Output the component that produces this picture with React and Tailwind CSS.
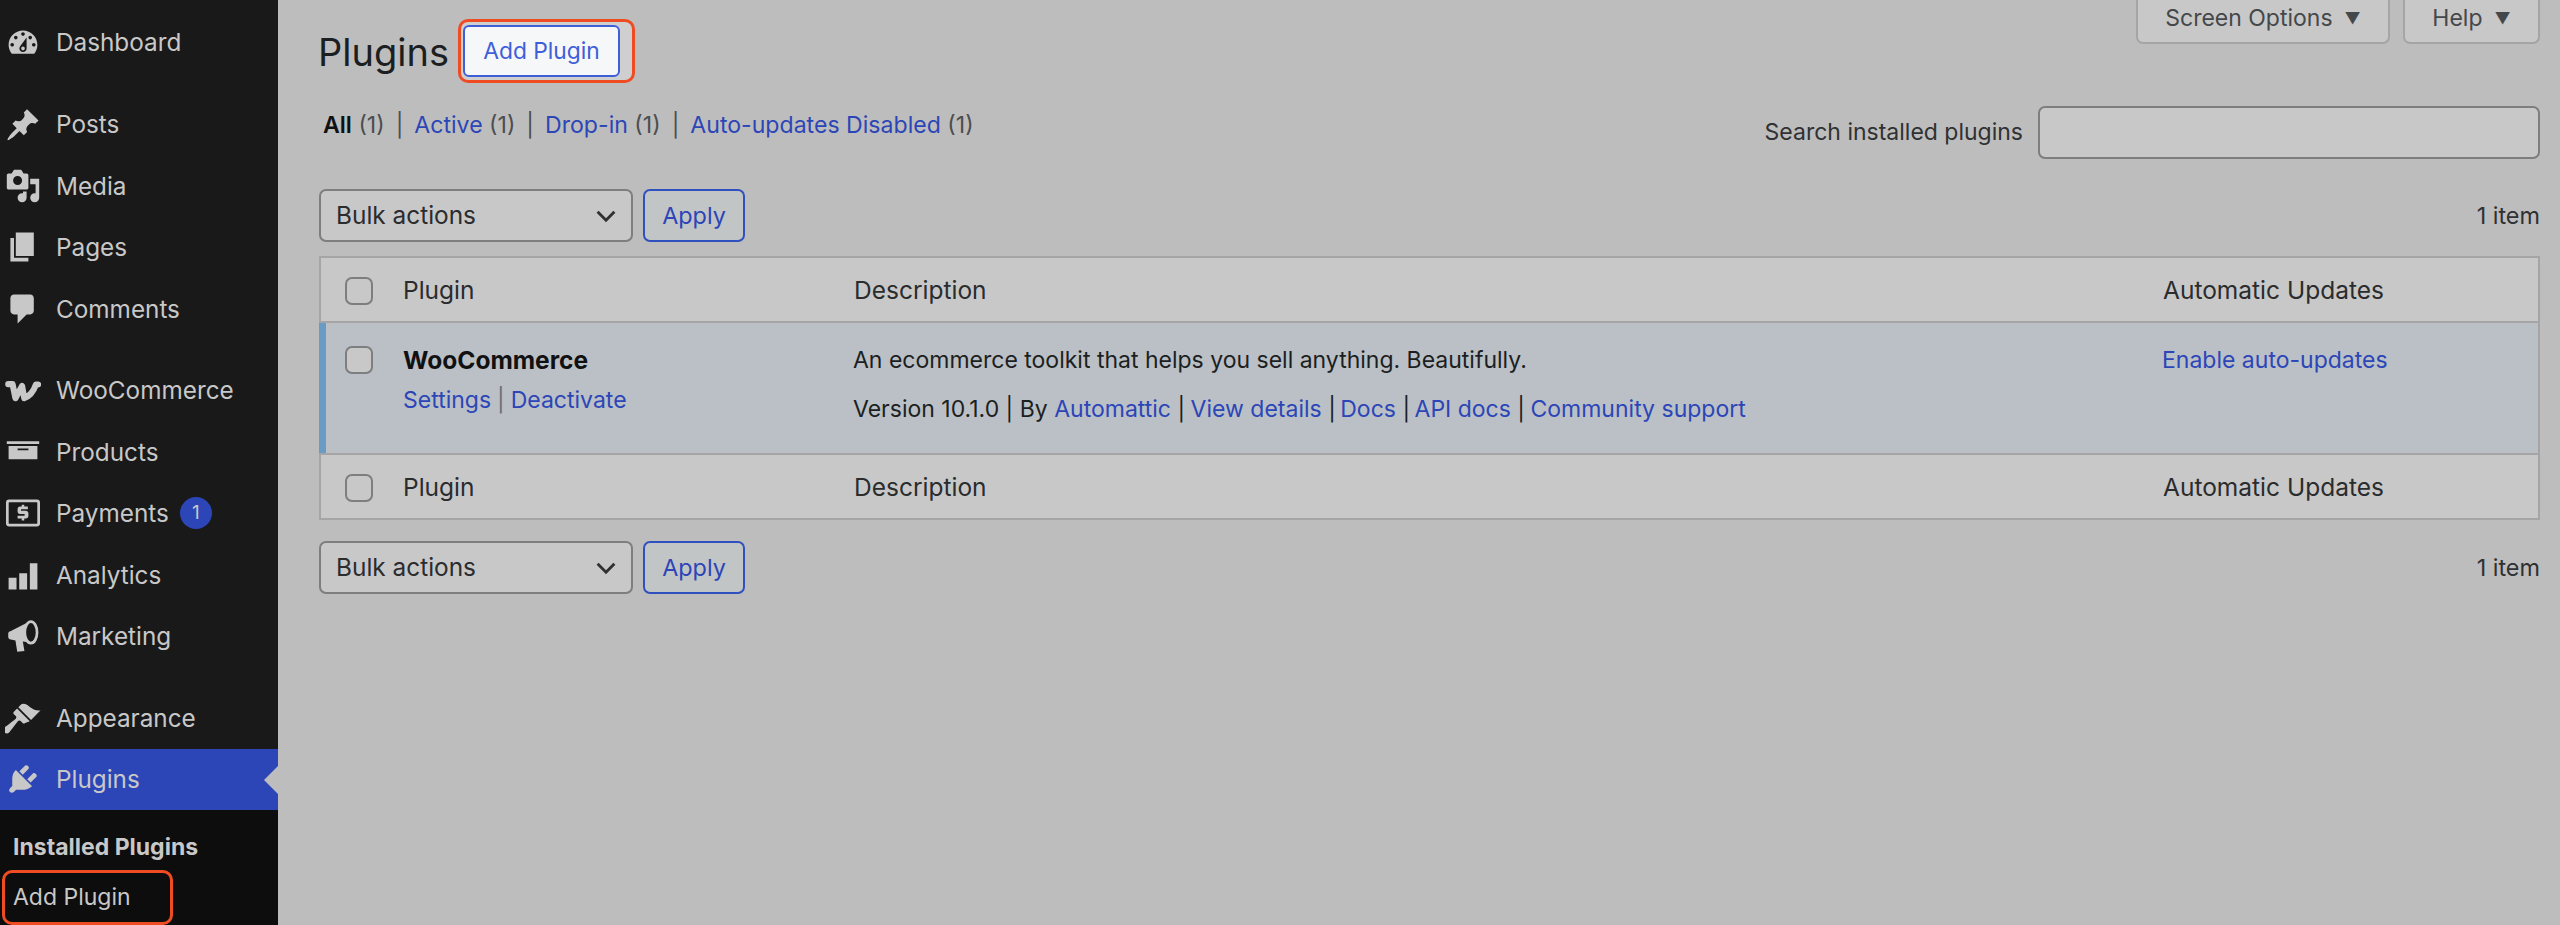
const FONT = { fontFamily: 'Inter, "Noto Sans", sans-serif' }

const ICONS = {
  dashboard: <path fillRule="evenodd" d="M3.76 16h12.48c1.1-1.37 1.76-3.11 1.76-5 0-4.42-3.58-8-8-8s-8 3.58-8 8c0 1.89.66 3.63 1.76 5zM10 4c.55 0 1 .45 1 1s-.45 1-1 1-1-.45-1-1 .45-1 1-1zM6 6c.55 0 1 .45 1 1s-.45 1-1 1-1-.45-1-1 .45-1 1-1zm8 0c.55 0 1 .45 1 1s-.45 1-1 1-1-.45-1-1 .45-1 1-1zm-5.37 5.55L12 7v6c0 1.1-.9 2-2 2s-2-.9-2-2c0-.57.24-1.08.63-1.45zM4 10c.55 0 1 .45 1 1s-.45 1-1 1-1-.45-1-1 .45-1 1-1zm12 0c.55 0 1 .45 1 1s-.45 1-1 1-1-.45-1-1 .45-1 1-1zm-5 3c0-.55-.45-1-1-1s-1 .45-1 1 .45 1 1 1 1-.45 1-1z" />,
  posts: <path d="M10.44 3.02l1.82-1.82 6.36 6.35-1.83 1.82c-1.05-.68-2.48-.57-3.41.36l-.75.75c-.92.93-1.04 2.35-.35 3.41l-1.83 1.82-2.41-2.41-2.8 2.79c-.42.42-3.38 2.71-3.8 2.29s1.86-3.39 2.28-3.81l2.79-2.79L4.1 9.36l1.83-1.82c1.05.69 2.48.57 3.4-.36l.75-.75c.93-.92 1.05-2.35.36-3.41z" />,
  media: <path fillRule="evenodd" d="M13 11V4c0-.55-.45-1-1-1h-1.67L9 1H5L3.67 3H2c-.55 0-1 .45-1 1v7c0 .55.45 1 1 1h10c.55 0 1-.45 1-1zM7 4.5c1.38 0 2.5 1.12 2.5 2.5S8.38 9.5 7 9.5 4.5 8.38 4.5 7 5.62 4.5 7 4.5zM14 6h5v10.5c0 1.38-1.12 2.5-2.5 2.5S14 17.88 14 16.5s1.12-2.5 2.5-2.5c.17 0 .34.02.5.05V9h-3V6zm-4 8.05V13h2v3.5c0 1.38-1.12 2.5-2.5 2.5S7 17.88 7 16.5 8.12 14 9.5 14c.17 0 .34.02.5.05z" />,
  pages: <path d="M6 15V2h10v13H6zm-1 1h8v2H3V5h2v11z" />,
  comments: <path d="M5 2h9c1.1 0 2 .9 2 2v7c0 1.1-.9 2-2 2h-2l-5 5v-5H5c-1.1 0-2-.9-2-2V4c0-1.1.9-2 2-2z" />,
  woo: <path fill="none" stroke="currentColor" strokeWidth="3.400" strokeLinejoin="round" strokeLinecap="round" d="M1.800 6.200H4.200L5.800 14 9.500 7.200 10.700 14C13.500 13 16 9.800 17.200 6.400H18.400" />,
  products: <path fillRule="evenodd" d="M1 4h18v1.600H1zM2 6.600h16V14H2zM7 8v1h6V8z" />,
  payments: (
    <>
      <rect x="1.300" y="3.300" width="17.400" height="13.400" rx="1" fill="none" stroke="currentColor" strokeWidth="1.500" />
      <path d="M9.300 5.400h1.400v1h2v1.500H8.900v.9h2.600c.9 0 1.500.6 1.500 1.400v1.400c0 .8-.6 1.400-1.500 1.400h-.8v1.100H9.300v-1.100H7v-1.500h3.900v-1h-2.600c-.8 0-1.300-.6-1.300-1.300V7.800c0-.8.6-1.400 1.300-1.400h1z" />
    </>
  ),
  analytics: <path d="M2 11.500h4.400V18H2zM7.900 9h4.400v9H7.900zM13.800 3.500h4.200V18h-4.200z" />,
  marketing: (
    <>
      <path d="M1.800 8.500C1.800 8 2.200 7.500 3 7.300L12.800 2.400C11.300 4 10.800 6 10.800 8S11.300 12 12.800 13.500L9.900 13 10.800 18.400 6.800 18.800 5.800 12.500 3.200 12C2.200 11.800 1.800 11 1.800 10.500z" />
      <ellipse cx="14.400" cy="8" rx="3.400" ry="6" fill="none" stroke="currentColor" strokeWidth="1.500" />
    </>
  ),
  appearance: <path d="M14.48 11.06L7.41 3.99l1.5-1.5c.5-.56 2.3-.47 3.51.32 1.21.8 1.43 1.28 2.91 2.1 1.18.64 2.45 1.26 4.45.85zm-.71.71L6.7 4.7 4.93 6.47c-.39.39-.39 1.02 0 1.41l1.06 1.06c.39.39.39 1.03 0 1.42-.6.6-6.04 4.64-6.4 5-.72.72-.72 2 0 2.7.72.72 1.98.72 2.7 0 .36-.36 4.4-5.8 5-6.4.39-.39 1.03-.39 1.42 0l1.06 1.06c.39.39 1.02.39 1.41 0z" />,
  plugins: <path d="M13.11 4.36L9.87 7.6 8 5.73l3.24-3.24c.35-.34 1.05-.2 1.56.32.52.51.66 1.21.31 1.55zm-8 1.77l.91-1.12 9.01 9.01-1.19.84c-.71.71-2.63 1.16-3.82 1.16H6.14L4.9 17.26c-.59.59-1.54.59-2.12 0-.59-.58-.59-1.53 0-2.12l1.24-1.24v-3.88c0-1.13.4-3.19 1.09-3.89zm7.26 3.97l3.24-3.24c.34-.35 1.04-.21 1.55.31.52.51.66 1.21.31 1.55l-3.24 3.25z" />,
}

const MENU = [
  [['dashboard', 'Dashboard']],
  [['posts', 'Posts'], ['media', 'Media'], ['pages', 'Pages'], ['comments', 'Comments']],
  [['woo', 'WooCommerce'], ['products', 'Products'], ['payments', 'Payments', 1], ['analytics', 'Analytics'], ['marketing', 'Marketing']],
]

function MenuRow({ icon, label, badge, active }) {
  return (
    <div className={`flex items-center h-[61.4px] pl-[5px] gap-[15px] relative ${active ? 'bg-[#2c46b8]' : ''}`}>
      <svg viewBox="0 0 20 20" fill="currentColor" className="w-[36px] h-[36px] shrink-0">{ICONS[icon]}</svg>
      <span className="text-[24.3px]">{label}</span>
      {badge && (
        <span className="w-[32px] h-[32px] -ml-[4px] rounded-full bg-[#2c46b8] flex items-center justify-center text-[19px]">{badge}</span>
      )}
      {active && (
        <span className="absolute right-0 top-[17px] w-0 h-0 border-y-[14px] border-y-transparent border-r-[14px] border-r-[#bdbdbd]" />
      )}
    </div>
  )
}

function Check() {
  return <span className="block w-[28px] h-[28px] rounded-[7px] border-2 border-[#7c7e80] bg-[#c8c8c8]" />
}

function HeadRow({ border }) {
  return (
    <div className={`grid grid-cols-[83px_450px_1309px_1fr] h-[65px] pt-[2px] items-center text-[24.5px] text-[#2a2c2e] bg-[#c8c8c8] ${border}`}>
      <div className="pl-[24px]"><Check /></div>
      <div className="-ml-[1px]">Plugin</div>
      <div>Description</div>
      <div>Automatic Updates</div>
    </div>
  )
}

function Actions() {
  return (
    <div className="flex items-center h-[53px] text-[24.4px]">
      <div className="w-[314px] h-full rounded-[7px] border-2 border-[#7c7e80] bg-[#c8c8c8] flex items-center justify-between pl-[15px] pr-[13px] text-[#2a2c2e]">
        <span>Bulk actions</span>
        <svg viewBox="0 0 20 20" className="w-[24px] h-[24px]" fill="none" stroke="#2f3133" strokeWidth="2.400"><path d="M3 6.500l7 7 7-7" /></svg>
      </div>
      <div className="w-[102px] h-full ml-[10px] rounded-[7px] border-2 border-[#3050c0] bg-[#c2c5c6] flex items-center justify-center text-[23.4px] text-[#2c46b8]">Apply</div>
      <span className="ml-auto text-[#2f3133] text-[23.4px]">1 item</span>
    </div>
  )
}

export default function App() {
  return (
    <div className="flex w-[2560px] h-[925px] overflow-hidden bg-[#bdbdbd]" style={FONT}>
      {/* Sidebar */}
      <aside className="w-[278px] shrink-0 flex flex-col bg-[#191919] text-[#c8c8c8] pt-[12px]">
        <div className="flex flex-col gap-[20.5px]">
          {MENU.map((group, i) => (
            <div key={i}>
              {group.map(([icon, label, badge]) => <MenuRow key={label} icon={icon} label={label} badge={badge} />)}
            </div>
          ))}
          <div>
            <MenuRow icon="appearance" label="Appearance" />
            <MenuRow icon="plugins" label="Plugins" active />
          </div>
        </div>
        <div className="flex-1 bg-[#0d0d0d] pt-[22px] pl-[2px] text-[23px]">
          <div className="pl-[11px] h-[38px] leading-[30px] font-bold">Installed Plugins</div>
          <div className="w-[171px] h-[55px] border-[3px] border-[#f04c23] rounded-[10px] pl-[8px] flex items-center">Add Plugin</div>
        </div>
      </aside>

      {/* Main */}
      <main className="flex-1 pl-[41px] pr-[20px]">
        <div className="flex items-start h-[83px]">
          <h1 className="text-[38px] mt-[27px] leading-[50px] text-[#1c1f22] w-[140px] -ml-[1px]">Plugins</h1>
          <div className="mt-[19px] w-[177px] h-[64px] border-[3px] border-[#f04c23] rounded-[10px] bg-[#cfcfcf] pl-[2px] pr-[12px] py-[3px]">
            <div className="h-full rounded-[6px] border-2 border-[#3f5fd8] bg-[#f5f7f8] flex items-center justify-center text-[22.8px] text-[#3f5fd8]">Add Plugin</div>
          </div>
          <div className="ml-auto flex gap-[13px] text-[23px] text-[#45484b]">
            <div className="w-[254px] h-[44px] rounded-b-[7px] border-x-2 border-b-2 border-[#a3a5a7] bg-[#c8c8c8] flex items-center justify-center gap-[12px] pb-[6px]">
              Screen Options <span className="text-[16px]">▼</span>
            </div>
            <div className="w-[137px] h-[44px] rounded-b-[7px] border-x-2 border-b-2 border-[#a3a5a7] bg-[#c8c8c8] flex items-center justify-center gap-[12px] pb-[6px]">
              Help <span className="text-[16px]">▼</span>
            </div>
          </div>
        </div>

        <div className="flex items-start mt-[23px] h-[53px]">
          <div className="flex gap-[11px] pl-[4px] text-[23.1px] leading-[38px] text-[#4c4e50]">
            <span><span className="font-semibold text-[#111]">All</span> (1)</span><span>|</span>
            <span><span className="text-[#2c46b8]">Active</span> (1)</span><span>|</span>
            <span><span className="text-[#2c46b8]">Drop-in</span> (1)</span><span>|</span>
            <span><span className="text-[#2c46b8]">Auto-updates Disabled</span> (1)</span>
          </div>
          <div className="ml-auto flex items-center gap-[15px] text-[23px] text-[#2f3133]">
            <span>Search installed plugins</span>
            <div className="w-[502px] h-[53px] rounded-[7px] border-2 border-[#7c7e80] bg-[#c8c8c8]" />
          </div>
        </div>

        <div className="mt-[30px]"><Actions /></div>

        <div className="mt-[14px] border-2 border-[#a5a5a5]">
          <HeadRow border="border-b-2 border-[#a5a5a5]" />
          <div className="grid grid-cols-[83px_450px_1309px_1fr] h-[130px] bg-[#bac0c5] border-l-[7px] border-[#6a9bc4] -ml-[2px]">
            <div className="pl-[19px] pt-[23px]"><Check /></div>
            <div className="pt-[19px] -ml-[5px]">
              <div className="font-bold text-[24.5px] text-[#111] leading-[36px] -ml-[1px]">WooCommerce</div>
              <div className="mt-[4px] text-[23px] leading-[36px] text-[#2c46b8] flex gap-[6px] -ml-[1px]">Settings <span className="text-[#6b7074]">|</span> Deactivate</div>
            </div>
            <div className="pt-[19px] -ml-[6px] text-[23px] text-[#1c1f22]">
              <div className="leading-[36px]">An ecommerce toolkit that helps you sell anything. Beautifully.</div>
              <div className="mt-[13px] leading-[36px] whitespace-pre">
                Version 10.1.0 | By <span className="text-[#2c46b8]">Automattic</span> | <span className="text-[#2c46b8] -ml-[1px]">View details</span> | <span className="text-[#2c46b8] -ml-[2px]">Docs</span> | <span className="text-[#2c46b8] -ml-[2px]">API docs</span> | <span className="text-[#2c46b8] -ml-[1px]">Community support</span>
              </div>
            </div>
            <div className="pt-[19px] -ml-[6px] text-[23px] leading-[36px] text-[#2c46b8]">Enable auto-updates</div>
          </div>
          <HeadRow border="border-t-2 border-[#a5a5a5]" />
        </div>

        <div className="mt-[21px]"><Actions /></div>
      </main>
    </div>
  )
}
